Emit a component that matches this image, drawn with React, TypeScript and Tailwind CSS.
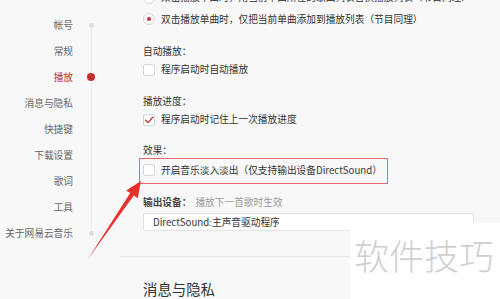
import React from 'react';

const navItems = ['帐号', '常规', '播放', '消息与隐私', '快捷键', '下载设置', '歌词', '工具', '关于网易云音乐'];

function Checkbox({ checked = false }: { checked?: boolean }) {
  return (
    <span className="flex h-[12px] w-[12px] shrink-0 items-center justify-center rounded-[2px] border border-[#d6d6d6] bg-white">
      {checked && (
        <svg width="10" height="10" viewBox="0 0 10 10" fill="none">
          <path d="M1.5 5.2 L4 7.6 L8.8 2.2" stroke="#c62f2f" strokeWidth="1.3" strokeLinecap="round" strokeLinejoin="round" />
        </svg>
      )}
    </span>
  );
}

function Radio({ checked = false }: { checked?: boolean }) {
  return (
    <span className="flex h-[12px] w-[12px] shrink-0 items-center justify-center rounded-full border border-[#d6d6d6] bg-white">
      {checked && <span className="h-[4px] w-[4px] rounded-full bg-[#c62f2f]" />}
    </span>
  );
}

export default function App() {
  return (
    <div
      className="relative flex h-[299px] w-[500px] overflow-hidden bg-[#f8f8f8] text-[9.7px] text-[#333]"
      style={{ fontFamily: '"Noto Sans CJK SC", "Noto Sans", sans-serif' }}
    >
      {/* Sidebar */}
      <div className="relative w-[120px] shrink-0 pt-[12px]">
        <div className="absolute left-[91px] top-[25px] h-[208px] w-px bg-[#ececec]" />
        {navItems.map((item, i) => (
          <div key={item} className="relative flex h-[26px] items-center">
            <span className={`w-[73px] text-right ${i === 2 ? 'text-[#c62f2f]' : 'text-[#666]'}`}>{item}</span>
            <span className="ml-[14px] flex w-[8px] justify-center">
              {i === 2 && <span className="h-[8px] w-[8px] rounded-full bg-[#c62f2f]" />}
              {(i === 0 || i === navItems.length - 1) && <span className="h-[5px] w-[5px] rounded-full bg-[#dedede]" />}
            </span>
          </div>
        ))}
      </div>

      {/* Settings */}
      <div className="-mt-[13px] flex flex-1 flex-col pl-[23px]">
        <div className="flex h-[22px] items-center gap-[6px]">
          <Radio />
          <span>双击播放单曲时，用当前单曲所在的歌曲列表替换播放列表（节目同理）</span>
        </div>
        <div className="flex h-[22px] items-center gap-[6px]">
          <Radio checked />
          <span>双击播放单曲时，仅把当前单曲添加到播放列表（节目同理）</span>
        </div>

        <div className="mt-[13px] flex h-[18px] items-center">自动播放：</div>
        <div className="flex h-[20px] items-center gap-[6px]">
          <Checkbox />
          <span>程序启动时自动播放</span>
        </div>

        <div className="mt-[13px] flex h-[18px] items-center">播放进度：</div>
        <div className="flex h-[20px] items-center gap-[6px]">
          <Checkbox checked />
          <span>程序启动时记住上一次播放进度</span>
        </div>

        <div className="mt-[14px] flex h-[15px] items-center">效果：</div>
        <div className="-ml-[4px] flex h-[27px] w-[249px] items-center gap-[6px] border-[1.5px] border-[#e46a6a] pb-[2px] pl-[3px]">
          <Checkbox />
          <span>开启音乐淡入淡出（仅支持输出设备DirectSound）</span>
        </div>

        <div className="mt-[10px] flex h-[16px] items-center gap-[4px]">
          <span className="font-bold text-[#444]">输出设备：</span>
          <span className="text-[#9a9a9a]">播放下一首歌时生效</span>
        </div>
        <div className="mt-[3px] flex h-[19px] w-[331px] items-center rounded-[2px] border border-[#e3e3e3] bg-white pl-[9px]">
          DirectSound:主声音驱动程序
        </div>

        <div className="-ml-[23px] mt-[25px] h-px bg-[#e6e6e6]" />
        <div className="mt-[22px] text-[14.4px] leading-[20px] text-[#333]">消息与隐私</div>
      </div>

      {/* Annotation arrow */}
      <svg className="pointer-events-none absolute left-0 top-0" width="500" height="299" viewBox="0 0 500 299">
        <polygon
          points="88,259 130.2,193.1 126.2,190.4 141,181 137.8,198.2 133.8,195.5"
          fill="#e8302c"
        />
      </svg>

      {/* Watermark */}
      <div className="absolute bottom-0 right-0 flex h-[76px] w-[150px] items-start bg-white pl-[4px] pt-[12px]">
        <span className="text-[35px] font-light leading-[40px] text-[#cfcfcf]">软件技巧</span>
      </div>
    </div>
  );
}
